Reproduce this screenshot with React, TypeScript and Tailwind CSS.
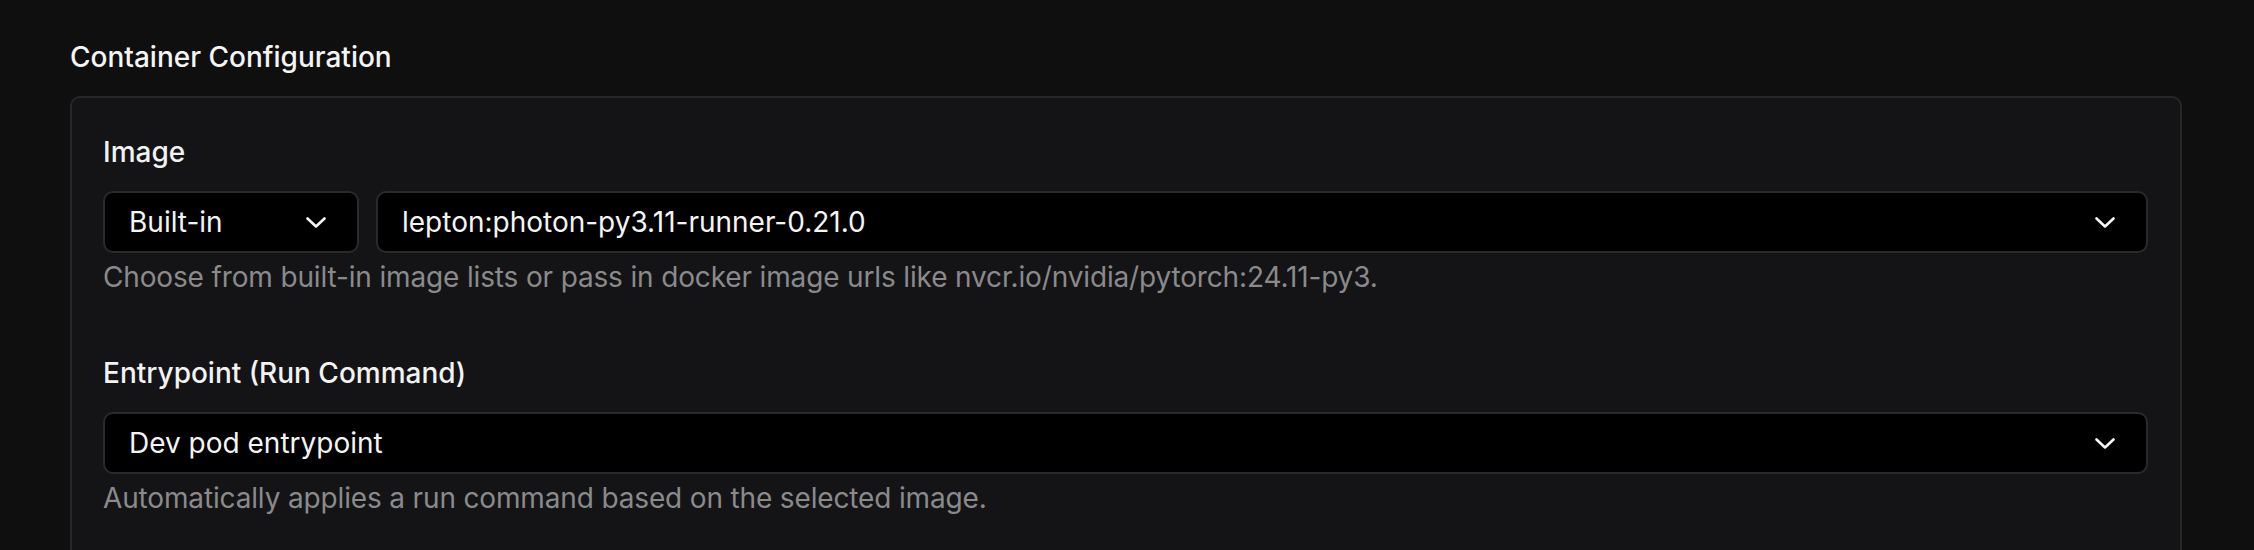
import type { ReactNode } from "react";

const font = { fontFamily: "Inter, 'Noto Sans', sans-serif" };

function Chevron() {
  return (
    <svg width="20" height="11" viewBox="0 0 20 11" fill="none" className="shrink-0">
      <polyline
        points="1.5,1.5 10,9.5 18.5,1.5"
        stroke="#f5f5f5"
        strokeWidth="2.6"
        strokeLinecap="round"
        strokeLinejoin="round"
      />
    </svg>
  );
}

function Select({ value, className }: { value: string; className?: string }) {
  return (
    <div
      className={`flex h-[62px] items-center justify-between rounded-[10px] border-2 border-[#2a2a2d] bg-black pl-[24px] pr-[31px] ${className ?? ""}`}
    >
      <span className="truncate text-[28px] leading-[40px] text-[#f4f4f4]">{value}</span>
      <Chevron />
    </div>
  );
}

function Field({ label, hint, children }: { label: string; hint: string; children: ReactNode }) {
  return (
    <div>
      <p className="text-[28px] font-medium leading-[40px] text-[#f2f2f2]">{label}</p>
      <div className="mt-[19px]">{children}</div>
      <p className="mt-[4px] text-[28px] leading-[40px] tracking-[-0.15px] text-[#8a8a8c]">{hint}</p>
    </div>
  );
}

export default function App() {
  return (
    <div className="h-[550px] overflow-hidden bg-[#0f0f10] pl-[70px] pr-[72px] pt-[37px]" style={font}>
      <h2 className="text-[28px] font-medium leading-[40px] text-[#f4f4f4]">Container Configuration</h2>
      <div className="mt-[19px] rounded-[10px] border-2 border-[#27272a] bg-[#141416] pb-[120px] pl-[31px] pr-[32px] pt-[34px]">
        <div className="flex flex-col gap-[56px]">
          <Field
            label="Image"
            hint="Choose from built-in image lists or pass in docker image urls like nvcr.io/nvidia/pytorch:24.11-py3."
          >
            <div className="flex gap-[17px]">
              <Select value="Built-in" className="w-[256px] shrink-0" />
              <Select value="lepton:photon-py3.11-runner-0.21.0" className="min-w-0 flex-1" />
            </div>
          </Field>
          <Field
            label="Entrypoint (Run Command)"
            hint="Automatically applies a run command based on the selected image."
          >
            <Select value="Dev pod entrypoint" />
          </Field>
        </div>
      </div>
    </div>
  );
}
